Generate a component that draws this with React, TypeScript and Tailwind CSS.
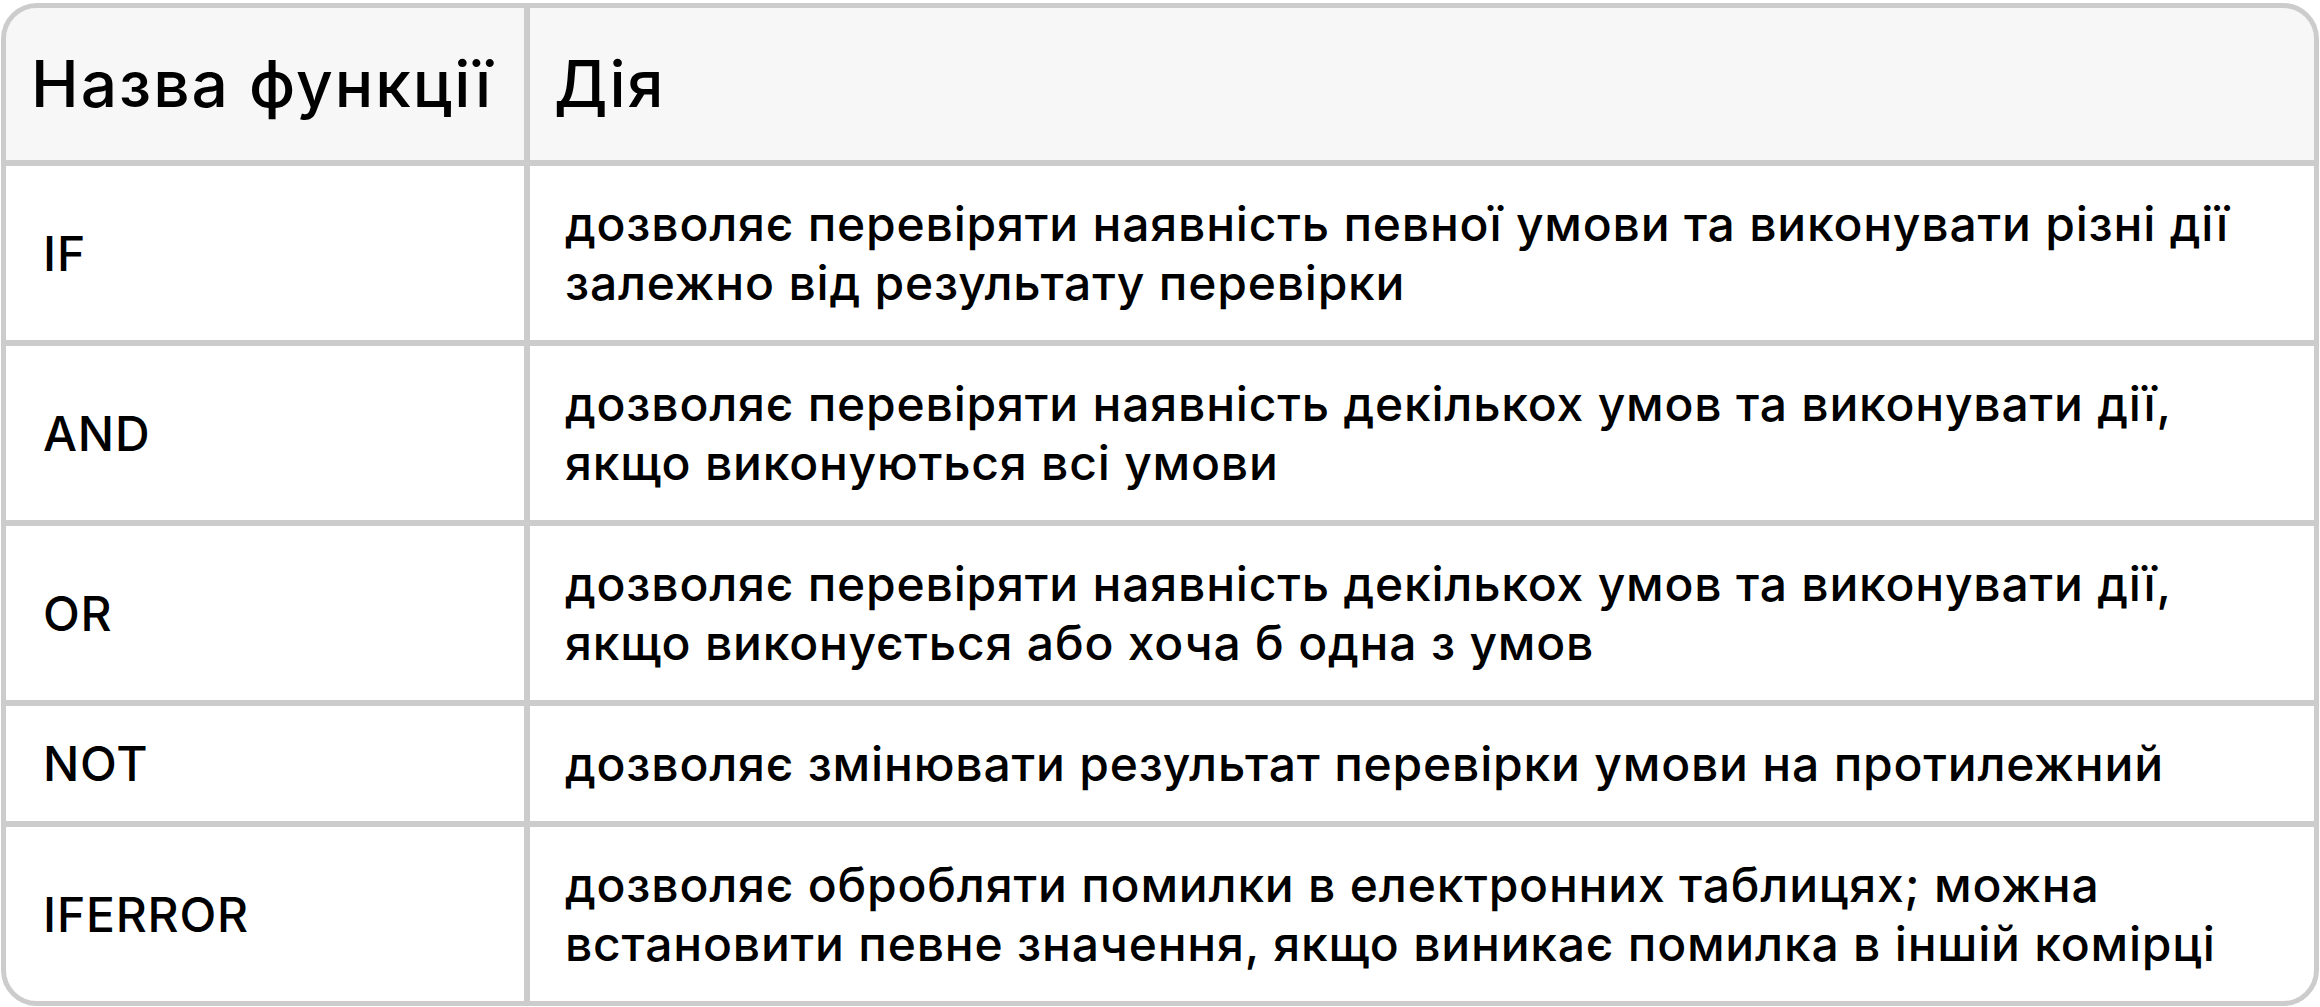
import React from "react";

const rows: { name: string; lines: string[] }[] = [
  {
    name: "IF",
    lines: [
      "дозволяє перевіряти наявність певної умови та виконувати різні дії",
      "залежно від результату перевірки",
    ],
  },
  {
    name: "AND",
    lines: [
      "дозволяє перевіряти наявність декількох умов та виконувати дії,",
      "якщо виконуються всі умови",
    ],
  },
  {
    name: "OR",
    lines: [
      "дозволяє перевіряти наявність декількох умов та виконувати дії,",
      "якщо виконується або хоча б одна з умов",
    ],
  },
  {
    name: "NOT",
    lines: ["дозволяє змінювати результат перевірки умови на протилежний"],
  },
  {
    name: "IFERROR",
    lines: [
      "дозволяє обробляти помилки в електронних таблицях; можна",
      "встановити певне значення, якщо виникає помилка в іншій комірці",
    ],
  },
];

export default function App() {
  return (
    <div className="min-h-screen bg-white pt-[3px] pl-px font-['Inter',sans-serif] font-medium text-black">
      {/* TABLE */}
      <div className="w-[2318px] rounded-[36px] border-[5px] border-[#cccccc] overflow-hidden">
        <div className="grid grid-cols-[518px_1fr] gap-[6px] bg-[#cccccc]">
          {/* Header */}
          <div className="h-[152px] bg-[#f7f7f7] flex items-center pl-[25px] text-[64px] leading-none tracking-[2px]">
            Назва функції
          </div>
          <div className="h-[152px] bg-[#f7f7f7] flex items-center pl-[24px] text-[64px] leading-none tracking-[2px]">
            Дія
          </div>

          {rows.map((row) => (
            <React.Fragment key={row.name}>
              <div className="bg-white flex items-center pl-[37px] py-[28px] text-[48px] leading-[59px] tracking-[0.8px]">
                {row.name}
              </div>
              <div className="bg-white flex flex-col justify-center pl-[35px] py-[28px] text-[48px] leading-[59px] tracking-[0.8px]">
                {row.lines.map((line) => (
                  <span key={line} className="whitespace-nowrap">
                    {line}
                  </span>
                ))}
              </div>
            </React.Fragment>
          ))}
        </div>
      </div>
    </div>
  );
}
